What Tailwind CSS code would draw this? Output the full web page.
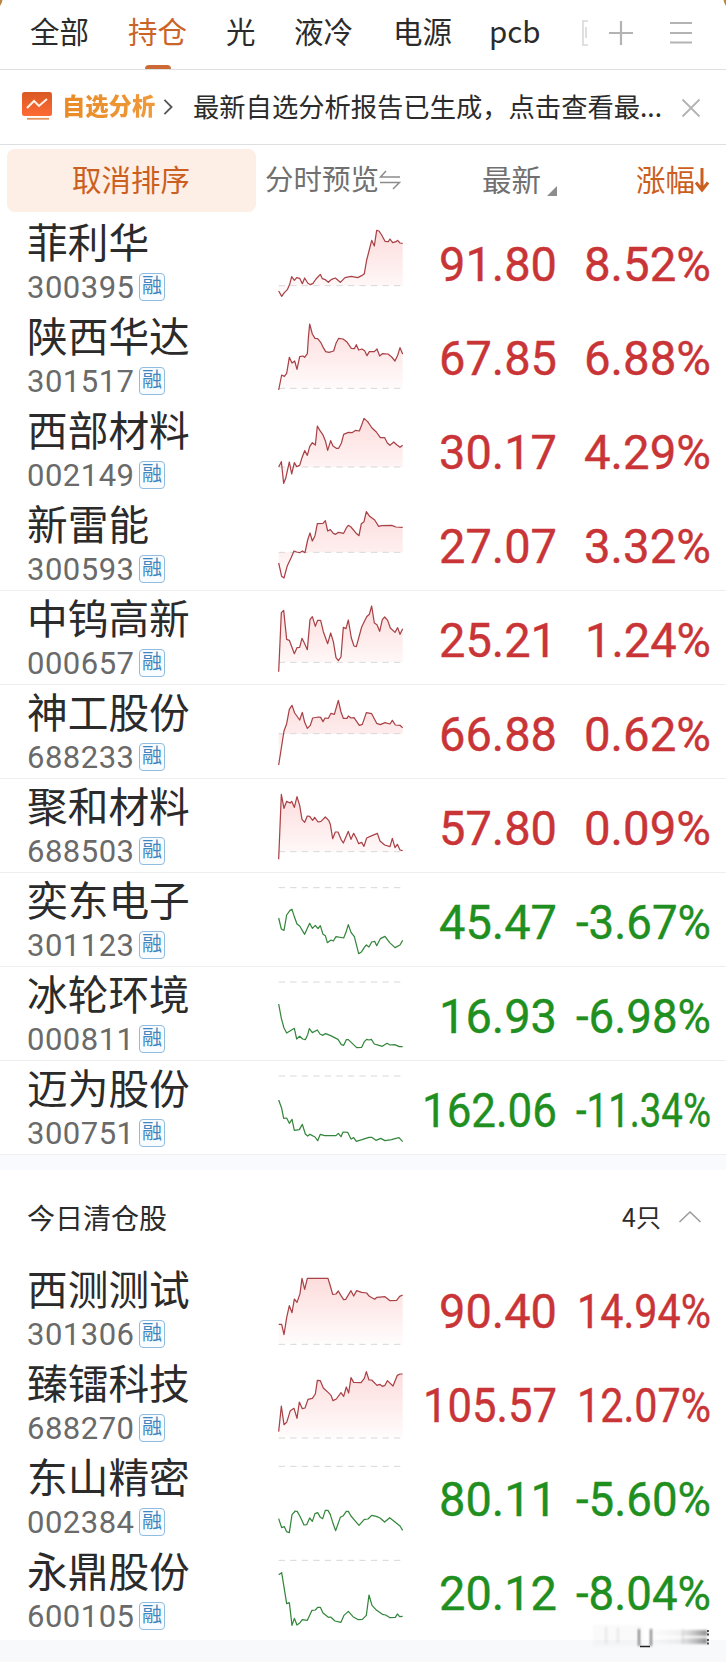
<!DOCTYPE html>
<html lang="zh-CN">
<head>
<meta charset="utf-8">
<title>自选</title>
<script src="https://cdn.jsdelivr.net/npm/@tailwindcss/browser@4"></script>
</head>
<body class="w-[726px] h-[1662px] overflow-hidden bg-white font-['Noto_Sans_CJK_SC',sans-serif] text-[#2b2b2b]">
<div class="relative flex h-full w-full flex-col overflow-hidden">
  <svg class="absolute left-0 top-0 h-2 w-full" viewBox="0 0 726 8"><path d="M0 0H2.500Q2 3 0 6ZM726 0H723.500Q724 3 726 6Z" fill="#b98540"/></svg>

  <nav class="flex h-[70px] shrink-0 items-center border-b border-[#dedfe1] text-[29.5px] leading-[60px] whitespace-nowrap">
    <span class="-mt-[9px] ml-[30px] w-[98px]">全部</span>
    <span class="relative h-[69px] w-[98px] text-[#cb6429]">持仓<i class="absolute bottom-0 left-[17px] h-[4px] w-[26px] rounded-t-sm bg-[#cb6a35]"></i></span>
    <span class="-mt-[9px] w-[68px]">光</span>
    <span class="-mt-[9px] w-[99px]">液冷</span>
    <span class="-mt-[9px] w-[96px]">电源</span>
    <span class="-mt-[9px] w-[91px] text-[29.5px]">pcb</span>
    <svg class="-mt-[4px] h-[30px] w-[120px]" viewBox="0 0 120 30" fill="none"><path d="M8 3H3V27H8M6 9V20" stroke="#d6d6d6" stroke-width="1.500"/><path d="M41 3V27M29 15H53" stroke="#b3b3b3" stroke-width="2.200"/><path d="M90 5H112M90 15H112M90 24.500H112" stroke="#b3b3b3" stroke-width="2"/></svg>
  </nav>

  <section class="flex h-[75px] shrink-0 items-center border-b border-[#dedfe1] whitespace-nowrap">
    <svg class="-mt-[2px] ml-[21px] h-[30px] w-[32px]" viewBox="0 0 32 30"><defs><linearGradient id="og" x2="0" y2="1"><stop stop-color="#d85a22"/><stop offset="1" stop-color="#ff6a35"/></linearGradient></defs><rect x="1" y="1" width="30" height="24" rx="2.500" fill="url(#og)"/><path d="M6 17L13 10L18 15L26 8" fill="none" stroke="#fff3e6" stroke-width="2"/><path d="M6 27.800H28" stroke="#e8935e" stroke-width="1.800"/></svg>
    <span class="-mt-[4px] ml-[9px] w-[94px] bg-linear-to-r from-[#e98a24] to-[#ef9a3c] bg-clip-text text-[23.300px] leading-[34px] font-black text-transparent">自选分析</span>
    <svg class="ml-[6px] h-[18px] w-[12px]" viewBox="0 0 12 20"><path d="M2 2L10 10L2 18" fill="none" stroke="#555" stroke-width="2"/></svg>
    <span class="-mt-[3px] ml-[19px] w-[480px] text-[26.300px] leading-[36px]">最新自选分析报告已生成，点击查看最...</span>
    <svg class="ml-[8px] mt-[1px] h-[20px] w-[20px]" viewBox="0 0 20 20"><path d="M1.500 1.500L18.500 18.500M18.500 1.500L1.500 18.500" stroke="#b3b3b3" stroke-width="1.800"/></svg>
  </section>

  <section class="flex h-[70px] shrink-0 items-center whitespace-nowrap text-[29.500px] leading-[58px]">
    <div class="ml-[7px] h-[63px] w-[249px] rounded-lg bg-[#fdeee6] text-center text-[#cb5f20]"><span class="mr-px">取消排序</span></div>
    <span class="ml-[9px] -mt-[5px] w-[114px] text-[28.500px] text-[#707070]">分时预览</span>
    <svg class="h-[22px] w-[22px]" viewBox="0 0 22 22"><path d="M7 2L1.500 8H21M1 13.500H20.500L14 20" fill="none" stroke="#8c8c8c" stroke-width="1.500"/></svg>
    <span class="ml-[81px] -mt-[5px] w-[60px] text-[#707070]">最新</span>
    <svg class="ml-[5px] mt-[22px] h-[10px] w-[10px]" viewBox="0 0 10 10"><path d="M10 0V10H0Z" fill="#8c8c8c"/></svg>
    <span class="ml-[79px] -mt-[5px] w-[59px] text-[#cb5f20]">涨幅</span>
    <svg class="-mt-px h-[26px] w-[14px]" viewBox="0 0 14 26"><path d="M7 1V23M1 15.500L7 23L13 15.500" fill="none" stroke="#cb5f20" stroke-width="3"/></svg>
  </section>

  <main id="held" class="flex shrink-0 flex-col"></main>
  <div class="h-[15px] shrink-0 bg-[#f8fafd]"></div>
  <section class="flex h-[92px] shrink-0 items-center">
    <span class="ml-[27px] mt-[2px] text-[28px]">今日清仓股</span>
    <span class="ml-auto mt-[1px] text-[25px]">4只</span>
    <svg class="mr-[24px] ml-[17px] mt-[2px] h-[14px] w-[24px]" viewBox="0 0 24 14"><path d="M1.500 12L12 2L22.500 12" fill="none" stroke="#999" stroke-width="1.500"/></svg>
  </section>
  <main id="closed" class="flex shrink-0 flex-col"></main>
  <div class="mt-[2px] h-[22px] shrink-0 bg-[#f8f9fb]"></div>

  <svg class="absolute left-[590px] top-[1624px] h-[24px] w-[120px]" viewBox="0 0 120 24"><defs><linearGradient id="sm"><stop stop-color="#999" stop-opacity="0.030"/><stop offset=".5" stop-color="#888" stop-opacity=".12"/><stop offset="1" stop-color="#444" stop-opacity=".6"/></linearGradient><filter id="sf"><feGaussianBlur stdDeviation="1"/></filter></defs><g filter="url(#sf)"><rect x="3" y="1" width="50" height="21" fill="#999" opacity=".05"/><path d="M16 3V20M28 4V19M93 5V20" stroke="#999" opacity=".4"/><path d="M49 5V22M61 5V22" stroke="#444" stroke-width="2" opacity=".7"/><path d="M62 6H117V12H62ZM62 14H117V20H62Z" fill="url(#sm)"/></g><path d="M50 22.500H60" stroke="#222" stroke-width="1.500"/><path d="M118 6V12M118 15V21" stroke="#222" stroke-width="1.500" stroke-dasharray="2 1.500"/></svg>
</div>
<script>
const held = [
 ["菲利华","300395","91.80",439,"8.52%",584,0,212,"41,228 50,244 58,233 67,224 74,208 80,185 88,196 95,188 104,190 112,206 119,189 128,204 136,209 144,205 153,192 166,178 172,191 181,194 190,202 200,193 211,189 226,202 240,188 258,184 278,188 290,182 298,176 305,135 312,108 320,76 328,93 335,46 342,48 350,60 360,79 370,80 375,72 383,83 393,80 398,76 405,84 413,85"],
 ["陕西华达","301517","67.85",439,"6.88%",584,-282,520,"41,525 50,480 58,484 65,475 73,427 81,444 89,438 96,463 104,425 114,423 119,427 127,416 130,370 134,327 142,357 150,370 158,371 167,382 175,398 182,410 192,412 206,408 213,385 221,370 234,372 245,380 259,400 268,401 274,389 281,405 291,402 299,407 306,422 313,410 328,410 336,402 344,423 352,416 369,417 380,426 390,438 398,421 405,398 413,417"],
 ["西部材料","002149","30.17",439,"4.29%",584,6,186,"41,186 49,170 56,235 62,220 73,171 80,207 88,173 95,185 104,181 111,158 119,137 127,151 134,125 142,113 151,120 157,63 165,77 173,88 181,107 188,136 197,107 204,123 214,130 221,130 229,115 236,88 250,82 261,83 272,76 283,78 290,60 297,40 308,50 321,69 334,81 346,98 359,98 367,114 375,121 386,111 396,120 405,127 413,121"],
 ["新雷能","300593","27.07",439,"3.32%",584,-276,442,"41,474 50,514 57,519 67,482 78,459 87,438 95,441 104,443 112,438 120,443 128,405 135,384 142,408 150,392 157,356 174,355 181,347 188,378 196,374 205,385 212,388 220,382 236,385 245,367 250,361 258,366 272,383 282,392 289,356 297,350 304,320 314,334 329,345 341,364 350,362 380,361 393,366 413,367"],
 ["中钨高新","000657","25.21",439,"1.24%",585,-3,217,"41,245 49,68 56,61 65,148 73,151 88,191 96,173 104,172 111,145 119,161 127,179 135,89 142,80 151,109 158,91 167,91 175,125 188,161 197,129 205,155 213,203 220,212 228,201 235,112 243,116 250,90 259,144 267,168 274,170 290,111 305,80 313,73 320,48 328,99 336,104 344,124 352,89 359,81 368,91 376,114 390,127 398,113 405,133 413,116"],
 ["神工股份","688233","66.88",439,"0.62%",584,-285,431,"41,525 57,423 65,401 73,358 81,346 89,369 104,390 112,367 119,397 127,415 136,406 143,384 160,381 167,382 174,395 180,384 190,385 198,370 208,373 220,331 228,366 235,385 246,385 250,378 258,384 267,383 283,406 292,403 304,368 320,371 335,400 346,404 360,398 375,402 382,391 391,405 405,406 413,413"],
 ["聚和材料","688503","57.80",439,"0.09%",584,3,215,"41,238 49,43 57,85 65,64 75,69 80,64 88,82 96,50 104,76 111,118 119,127 127,108 134,109 143,121 149,112 159,126 168,124 181,111 191,121 196,133 203,176 211,156 219,156 228,178 235,189 243,170 250,154 258,178 266,160 274,175 281,191 290,187 297,199 305,174 321,167 337,160 345,183 359,195 375,200 382,175 390,203 397,193 405,210 413,212"],
 ["奕东电子","301123","45.47",439,"-3.67%",576,-279,323,"41,414 49,447 57,451 65,405 75,391 81,388 87,407 96,432 104,438 119,463 127,445 134,430 142,445 151,436 159,446 166,437 174,463 181,467 187,488 198,480 205,483 213,470 236,474 243,457 250,434 258,457 268,470 281,521 290,515 298,502 304,495 312,501 320,486 329,484 335,497 346,476 360,469 374,488 390,503 405,495 413,481"],
 ["冰轮环境","000811","16.93",439,"-6.98%",576,-21,66,"41,132 49,175 57,204 65,219 76,212 88,205 95,237 104,229 113,237 121,239 128,224 133,206 142,218 157,210 165,222 172,226 182,221 197,227 219,238 229,254 236,256 244,239 250,239 275,263 290,262 298,245 305,238 312,240 319,238 328,252 342,256 352,259 366,250 375,255 389,254 403,260 413,260"],
 ["迈为股份","300751","162.06",422,"-11.34%",576,-303,348,"41,420 50,445 56,475 65,474 73,490 81,478 88,511 103,509 112,493 121,522 128,528 135,523 150,531 158,542 166,523 179,527 213,527 220,520 228,530 234,516 248,517 258,537 266,533 274,544 291,539 312,532 320,532 333,541 347,535 360,542 380,539 390,536 402,533 413,545"]
];
const closed = [
 ["西测测试","301306","90.40",439,"14.94%",577,9,238,"41,178 50,178 57,209 65,158 73,122 81,143 88,102 96,112 105,86 111,40 119,73 127,40 189,40 196,63 203,88 213,87 220,78 228,92 236,104 242,103 258,77 266,93 275,77 290,82 305,84 313,94 329,103 336,97 360,95 375,107 395,106 404,94 413,90"],
 ["臻镭科技","688270","105.57",423,"12.07%",577,-273,519,"41,500 49,423 57,479 65,472 76,437 87,430 96,460 103,411 112,431 120,429 129,403 142,400 151,387 157,346 166,347 175,369 190,383 198,391 204,407 214,402 228,383 236,394 244,366 251,384 258,338 266,352 288,353 298,340 304,320 312,345 320,345 336,361 344,358 352,364 360,361 367,347 384,363 397,331 405,327 413,327"],
 ["东山精密","002384","80.11",439,"-5.60%",576,0,49,"41,206 50,233 58,230 65,245 73,248 81,194 91,183 97,185 106,201 117,225 125,224 134,204 142,214 150,191 158,188 166,202 173,206 181,181 189,181 196,194 204,220 212,242 226,202 235,197 244,184 250,184 258,198 269,211 282,226 298,208 309,207 320,196 334,199 345,204 359,216 374,203 390,216 405,228 413,241"],
 ["永鼎股份","600105","20.12",439,"-8.04%",576,-282,331,"41,374 50,368 65,461 73,458 81,526 88,505 96,525 105,518 112,509 127,511 141,481 151,480 158,472 166,472 174,489 190,502 197,501 210,513 228,517 237,496 250,484 264,500 280,509 292,508 304,496 312,435 321,466 335,481 352,493 362,495 375,503 391,502 397,492 404,500 413,499"]
];
function row([name, code, price, px, pct, cx, dy, base, pts], lined) {
  const down = pct[0] === "-", col = down ? "#1f8f1f" : "#c93537";
  const area = down ? "" : `<polygon points="41,${base} ${pts} 413,${base}" fill="url(#pk)"/>`;
  return `<div class="flex h-[94px] shrink-0 ${lined ? "border-b border-[#eceef0]" : ""}">
   <div class="w-[265px] pl-[27px] whitespace-nowrap">
    <div class="mt-[3px] h-[46px] text-[40.700px] leading-[46px]">${name}</div>
    <div class="mt-[8px] flex h-[29px] items-center">
      <svg class="h-[29px] w-[108px] overflow-visible" viewBox="0 0 108 29"><text x="0" y="25.500" font-family="Roboto" font-size="31" fill="#6a6a6a" textLength="107">${code}</text></svg>
      <span class="ml-[4px] flex h-[28px] w-[26px] items-center justify-center rounded-[4px] border border-[#8fbcdf] bg-[#f8fcff] text-[20px] leading-[24px] text-[#3e86bd]"><b class="-mt-[3px] font-normal">融</b></span>
    </div>
   </div>
   <svg class="h-[94px] w-[150px] shrink-0" viewBox="0 0 450 282"><defs><linearGradient id="pk" x2="0" y2="1"><stop stop-color="#fddcdc"/><stop offset="1" stop-color="#fffcfc"/></linearGradient></defs><g transform="translate(0 ${dy})" fill="none">${area}<path d="M41 ${base}H406" stroke="#d8d8d8" stroke-width="3" stroke-dasharray="19 15.600"/><polyline points="${pts}" stroke="${down ? "#33863b" : "#a94146"}" stroke-width="3.700" stroke-linejoin="round"/></g></svg>
   <svg class="h-[94px] w-[311px] shrink-0 overflow-visible" viewBox="415 0 311 94"><g font-family="Roboto" font-size="47.500" fill="${col}" stroke="${col}" stroke-width=".4"><text x="${px}" y="66" textLength="${557 - px}" lengthAdjust="spacingAndGlyphs">${price}</text><text x="${cx}" y="66" textLength="${711 - cx}" lengthAdjust="spacingAndGlyphs">${pct}</text></g></svg>
  </div>`;
}
document.getElementById("held").innerHTML = held.map((r, i) => row(r, i > 2)).join("");
document.getElementById("closed").innerHTML = closed.map(r => row(r, false)).join("");
</script>
</body>
</html>
